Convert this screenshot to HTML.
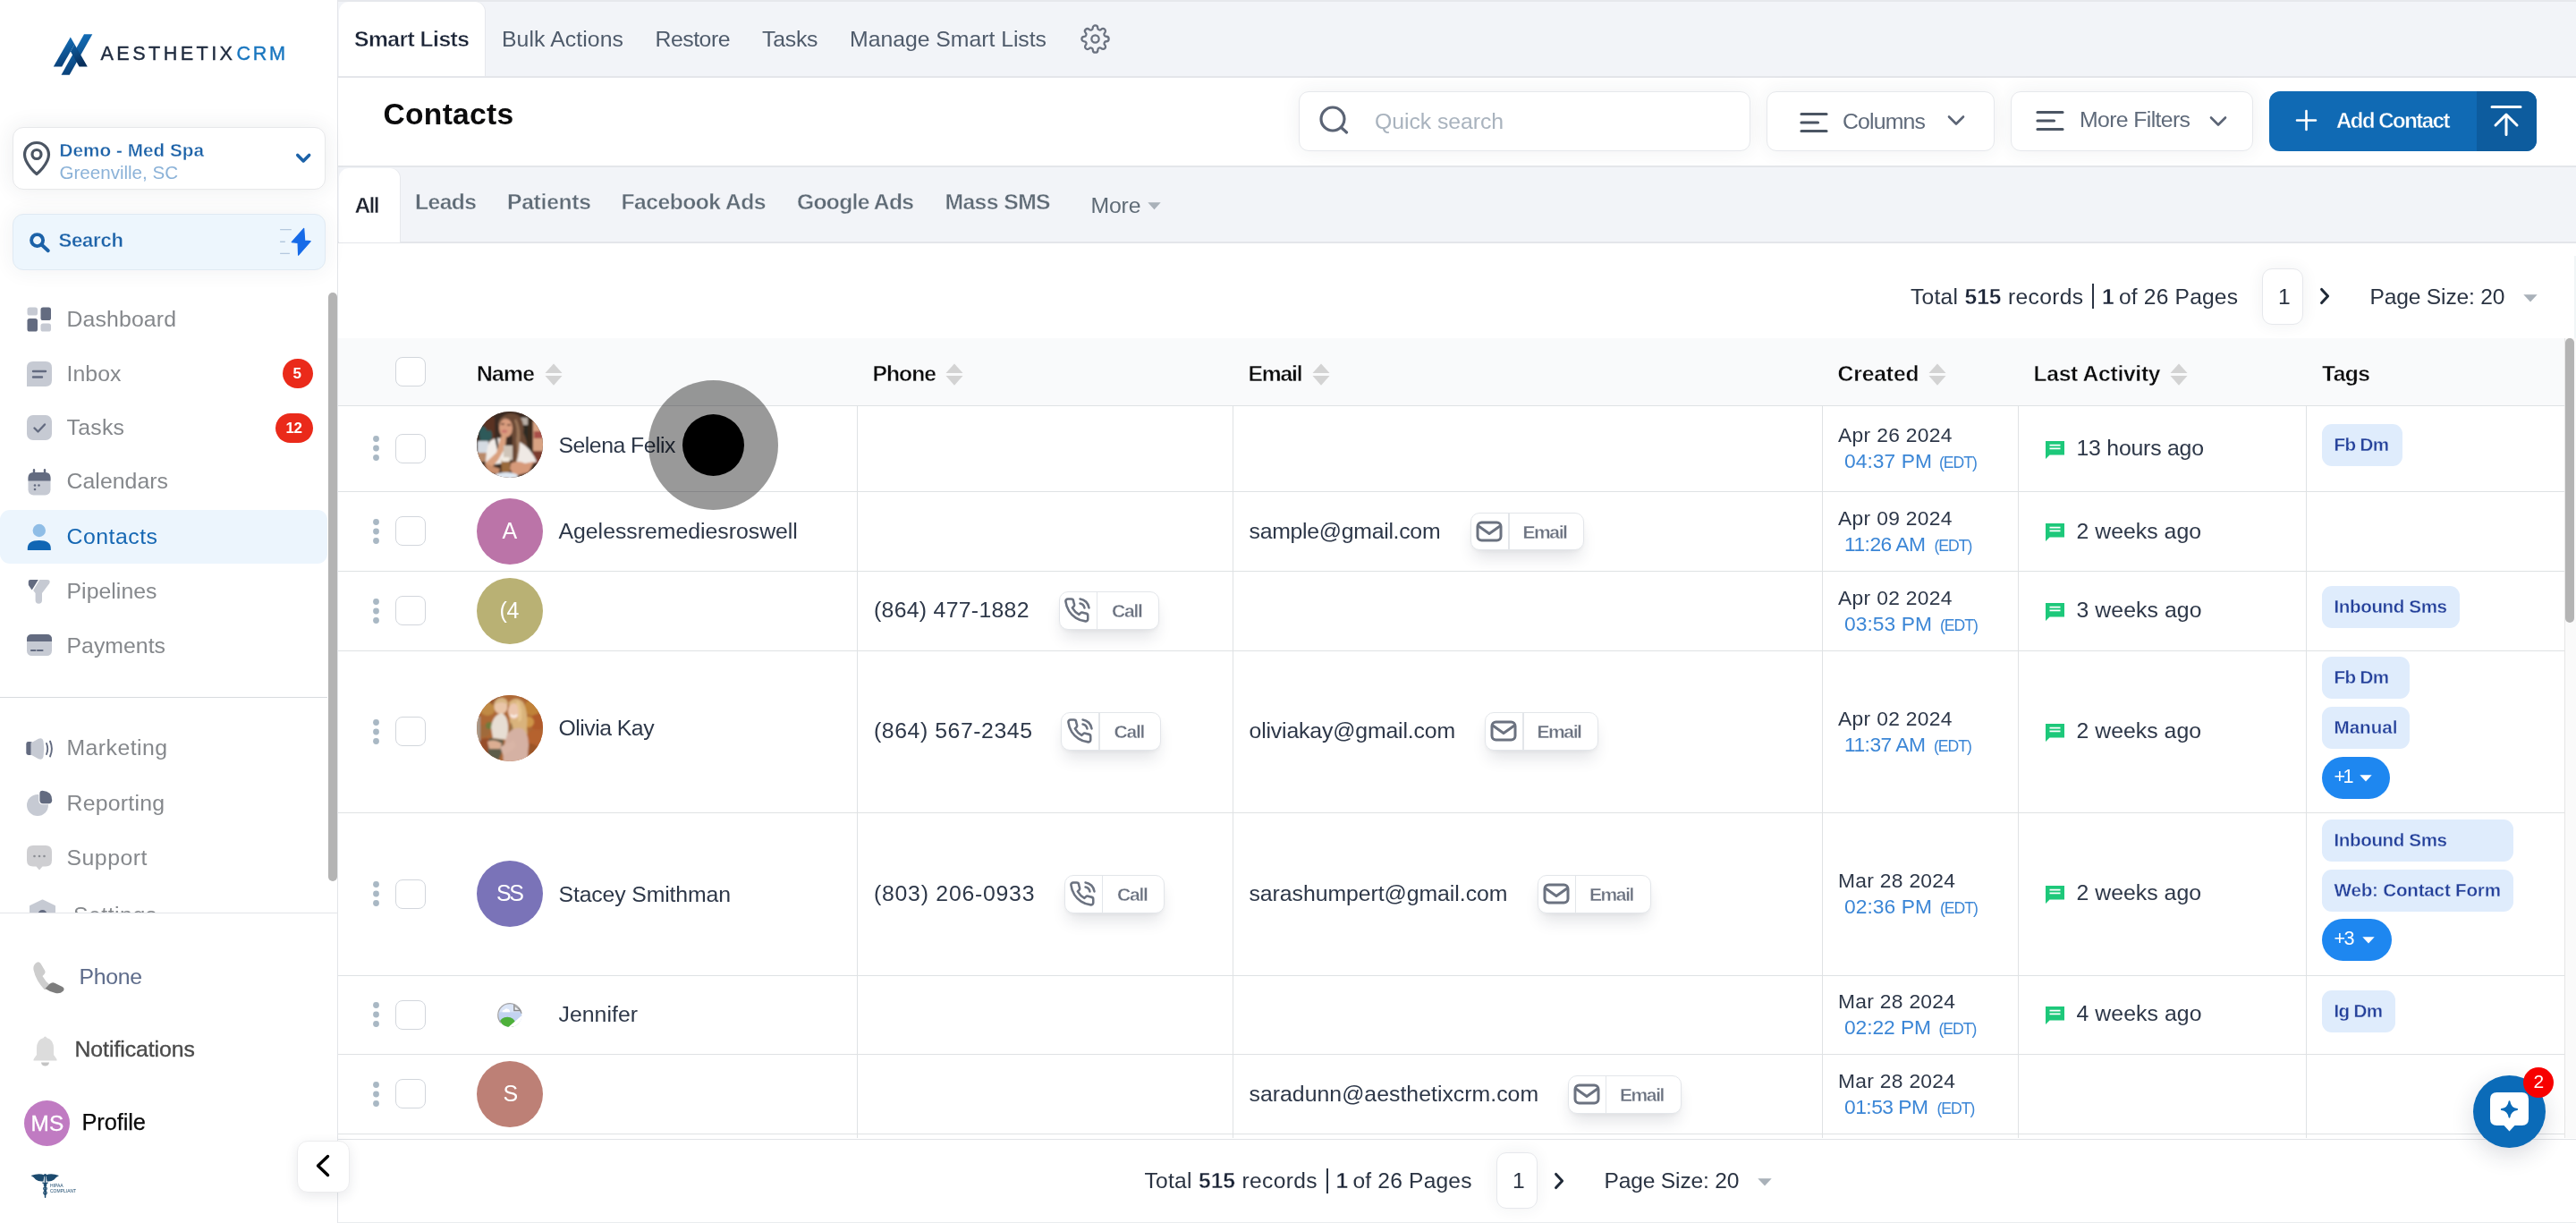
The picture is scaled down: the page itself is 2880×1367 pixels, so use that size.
<!DOCTYPE html>
<html lang="en"><head><meta charset="utf-8"><title>Contacts</title>
<style>
*{box-sizing:border-box;margin:0;padding:0}
html,body{width:2880px;height:1367px;overflow:hidden;background:#fff}
body{position:relative;font-family:"Liberation Sans",sans-serif;color:#2d3748}
.a{position:absolute}
.t{position:absolute;white-space:nowrap;line-height:1}
svg{position:absolute;overflow:visible}
.hl{position:absolute;height:2px;background:#e4e6ea}
.vl{position:absolute;width:2px;background:#e4e6ea}
.cb{position:absolute;width:34px;height:33px;border:1.5px solid #d2d6dc;border-radius:8px;background:#fff}
.av{position:absolute;width:74px;height:74px;border-radius:50%;overflow:hidden}
.tag{position:absolute;height:47px;border-radius:11px;background:#dfecfc}
.pill{position:absolute;height:47px;border-radius:24px;background:#1e87f0}
.btn{position:absolute;height:42.5px;border:1.5px solid #e3e6ea;border-radius:10px;background:#fff;box-shadow:0 12px 18px -4px rgba(30,40,60,.13),0 2px 4px rgba(30,40,60,.04)}
.btn i{position:absolute;top:0;bottom:0;width:1.5px;background:#e3e6ea}
.box{position:absolute;border:1.5px solid #e6e8ec;border-radius:11px;background:#fff;box-shadow:0 0 22px rgba(40,50,70,.07)}
#w{position:absolute;left:0;top:0;width:2880px;height:1367px;will-change:transform}

</style></head>
<body>
<div id="w">
<div class="a" style="left:378px;top:0;width:2502px;height:86px;background:#f2f4f8"></div>
<div class="hl" style="left:378px;top:0;width:2502px;height:2px;background:#e6e8ec"></div>
<div class="hl" style="left:378px;top:85px;width:2502px"></div>
<div class="a" style="left:379px;top:2px;width:163px;height:83px;background:#fff;border-radius:11px 11px 0 0;box-shadow:1px 0 0 #e6e8ec"></div>
<span class="t" style="left:396.0px;top:32.0px;font-size:24.6px;color:#1b2436;font-weight:700;letter-spacing:-0.50px;-webkit-text-stroke:0.39px #fff;">Smart Lists</span>
<span class="t" style="left:561.0px;top:32.0px;font-size:24.8px;color:#4f5b6b;letter-spacing:0.08px;">Bulk Actions</span>
<span class="t" style="left:732.5px;top:32.0px;font-size:24.8px;color:#4f5b6b;letter-spacing:-0.47px;">Restore</span>
<span class="t" style="left:852.0px;top:32.0px;font-size:24.8px;color:#4f5b6b;letter-spacing:-0.22px;">Tasks</span>
<span class="t" style="left:950.0px;top:32.0px;font-size:24.8px;color:#4f5b6b;letter-spacing:-0.03px;">Manage Smart Lists</span>
<svg style="left:1207.5px;top:27.2px" width="33" height="33" viewBox="0 0 24 24" fill="none" stroke="#6b7280" stroke-width="1.65" stroke-linecap="round" stroke-linejoin="round"><circle cx="12" cy="12" r="3"/><path d="M19.4 15a1.65 1.65 0 0 0 .33 1.82l.06.06a2 2 0 1 1-2.83 2.83l-.06-.06a1.65 1.65 0 0 0-1.82-.33 1.65 1.65 0 0 0-1 1.51V21a2 2 0 0 1-4 0v-.09A1.65 1.65 0 0 0 9 19.4a1.65 1.65 0 0 0-1.82.33l-.06.06a2 2 0 1 1-2.83-2.83l.06-.06a1.65 1.65 0 0 0 .33-1.82 1.65 1.65 0 0 0-1.51-1H3a2 2 0 0 1 0-4h.09A1.65 1.65 0 0 0 4.6 9a1.65 1.65 0 0 0-.33-1.82l-.06-.06a2 2 0 1 1 2.83-2.83l.06.06a1.65 1.65 0 0 0 1.82.33H9a1.65 1.65 0 0 0 1-1.51V3a2 2 0 0 1 4 0v.09a1.65 1.65 0 0 0 1 1.51 1.65 1.65 0 0 0 1.82-.33l.06-.06a2 2 0 1 1 2.83 2.83l-.06.06a1.65 1.65 0 0 0-.33 1.82V9a1.65 1.65 0 0 0 1.51 1H21a2 2 0 0 1 0 4h-.09a1.65 1.65 0 0 0-1.51 1z"/></svg>
<span class="t" style="left:428.5px;top:111.0px;font-size:33.6px;color:#0b0b0c;font-weight:700;letter-spacing:0.29px;">Contacts</span>
<div class="box" style="left:1452px;top:102px;width:505px;height:66.5px"></div>
<svg style="left:1472px;top:115px" width="38" height="38" viewBox="0 0 38 38" fill="none" stroke="#5b6475" stroke-width="3.2" stroke-linecap="round"><circle cx="18" cy="18" r="13"/><path d="M27.5 27.5L33.5 33"/></svg>
<span class="t" style="left:1537.0px;top:124.0px;font-size:24.8px;color:#a9b3be;letter-spacing:-0.06px;">Quick search</span>
<div class="box" style="left:1975px;top:102px;width:255px;height:66.5px"></div>
<svg style="left:2011px;top:124px" width="36" height="26" viewBox="0 0 36 26" fill="none" stroke="#4b5563" stroke-width="3.2" stroke-linecap="round"><path d="M3 3.5H31M3 13H21.5M3 22.5H31"/></svg>
<span class="t" style="left:2060.0px;top:124.0px;font-size:24.8px;color:#5f6a7a;letter-spacing:-0.81px;">Columns</span>
<svg style="left:2176px;top:128px" width="22" height="14" viewBox="0 0 22 14" fill="none" stroke="#5b6475" stroke-width="2.6" stroke-linecap="round" stroke-linejoin="round"><path d="M3 2.5L11 10.5L19 2.5"/></svg>
<div class="box" style="left:2248px;top:102px;width:271px;height:66.5px"></div>
<svg style="left:2275px;top:122px" width="36" height="26" viewBox="0 0 36 26" fill="none" stroke="#4b5563" stroke-width="3.2" stroke-linecap="round"><path d="M3 3.5H31M3 13H21.5M3 22.5H31"/></svg>
<span class="t" style="left:2325.0px;top:122.0px;font-size:24.8px;color:#5f6a7a;letter-spacing:-0.63px;">More Filters</span>
<svg style="left:2469px;top:129px" width="22" height="14" viewBox="0 0 22 14" fill="none" stroke="#5b6475" stroke-width="2.6" stroke-linecap="round" stroke-linejoin="round"><path d="M3 2.5L11 10.5L19 2.5"/></svg>
<div class="a" style="left:2537px;top:102px;width:299px;height:67px;border-radius:12px;background:#106ab4;overflow:hidden"><div class="a" style="left:232px;top:0;width:67px;height:67px;background:#0d5c9e"></div></div>
<svg style="left:2565px;top:122px" width="27" height="25" viewBox="0 0 27 25" fill="none" stroke="#fff" stroke-width="2.6" stroke-linecap="round"><path d="M13.5 2V23M3 12.5H24"/></svg>
<span class="t" style="left:2612.0px;top:123.0px;font-size:23.8px;color:#fff;font-weight:700;letter-spacing:-1.40px;-webkit-text-stroke:0.38px #106ab4;">Add Contact</span>
<svg style="left:2782px;top:116px" width="40" height="38" viewBox="0 0 40 38" fill="none" stroke="#fff" stroke-width="3" stroke-linecap="round" stroke-linejoin="round"><path d="M4 3.5H36M20 34.5V12.5M8 24L20 12L32 24"/></svg>
<div class="hl" style="left:378px;top:185px;width:2502px"></div>
<div class="a" style="left:378px;top:187px;width:2502px;height:84px;background:#f2f4f8"></div>
<div class="hl" style="left:378px;top:270px;width:2502px"></div>
<div class="a" style="left:379px;top:188px;width:68px;height:83px;background:#fff;border-radius:11px 11px 0 0;box-shadow:1px 0 0 #e6e8ec"></div>
<span class="t" style="left:396.5px;top:218.0px;font-size:24.6px;color:#1f2430;font-weight:700;letter-spacing:-1.72px;-webkit-text-stroke:0.39px #fff;">All</span>
<span class="t" style="left:464.0px;top:214.0px;font-size:24.6px;color:#5f6b76;font-weight:700;letter-spacing:-0.52px;-webkit-text-stroke:0.39px #f2f4f8;">Leads</span>
<span class="t" style="left:567.0px;top:214.0px;font-size:24.6px;color:#5f6b76;font-weight:700;letter-spacing:-0.24px;-webkit-text-stroke:0.39px #f2f4f8;">Patients</span>
<span class="t" style="left:694.5px;top:214.0px;font-size:24.6px;color:#5f6b76;font-weight:700;letter-spacing:-0.47px;-webkit-text-stroke:0.39px #f2f4f8;">Facebook Ads</span>
<span class="t" style="left:891.0px;top:214.0px;font-size:24.6px;color:#5f6b76;font-weight:700;letter-spacing:-0.68px;-webkit-text-stroke:0.39px #f2f4f8;">Google Ads</span>
<span class="t" style="left:1056.5px;top:214.0px;font-size:24.6px;color:#5f6b76;font-weight:700;letter-spacing:-0.52px;-webkit-text-stroke:0.39px #f2f4f8;">Mass SMS</span>
<span class="t" style="left:1219.5px;top:218.0px;font-size:24.8px;color:#5f6b76;letter-spacing:-0.17px;">More</span>
<svg style="left:1283px;top:226px" width="15" height="9" viewBox="0 0 15 9"><path d="M0.3 0.3H14.7L7.5 8.3Z" fill="#a9b1b9"/></svg>
<span class="t" style="left:2136.0px;top:320.0px;font-size:24.6px;color:#2a3342;letter-spacing:0.26px;">Total</span>
<span class="t" style="left:2196.5px;top:320.0px;font-size:24.6px;color:#1b2436;font-weight:700;letter-spacing:-0.02px;-webkit-text-stroke:0.39px #fff;">515</span>
<span class="t" style="left:2245.0px;top:320.0px;font-size:24.6px;color:#2a3342;letter-spacing:0.33px;">records</span>
<div class="a" style="left:2339.0px;top:317.0px;width:2px;height:28px;background:#2a3342"></div>
<span class="t" style="left:2350.0px;top:320.0px;font-size:24.6px;color:#1b2436;font-weight:700;-webkit-text-stroke:0.39px #fff;">1</span>
<span class="t" style="left:2369.0px;top:320.0px;font-size:24.6px;color:#2a3342;letter-spacing:0.17px;">of 26 Pages</span>
<div class="a" style="left:2529px;top:300px;width:46px;height:63px;border:1.5px solid #e6e8ec;border-radius:11px;background:#fff;box-shadow:0 0 18px rgba(40,50,70,.07)"></div>
<span class="t" style="left:2547.0px;top:320.0px;font-size:24.6px;color:#2a3342;">1</span>
<svg style="left:2592px;top:320.0px" width="14" height="22" viewBox="0 0 14 22" fill="none" stroke="#1f2937" stroke-width="3" stroke-linecap="round" stroke-linejoin="round"><path d="M3.6 3.4L10.6 11L3.6 18.6"/></svg>
<span class="t" style="left:2649.5px;top:320.0px;font-size:24.6px;color:#2a3342;letter-spacing:-0.18px;">Page Size: 20</span>
<svg style="left:2821px;top:328.5px" width="16" height="9" viewBox="0 0 16 9"><path d="M0.3 0.3H15.7L8 8.6Z" fill="#a9b1b9"/></svg>
<div class="a" style="left:378px;top:378px;width:2489px;height:75px;background:#f9fafb"></div>
<div class="hl" style="left:378px;top:453px;width:2489px;height:1px;background:#dfe2e4"></div>
<div class="hl" style="left:378px;top:549px;width:2489px;height:1px;background:#dfe2e4"></div>
<div class="hl" style="left:378px;top:638px;width:2489px;height:1px;background:#dfe2e4"></div>
<div class="hl" style="left:378px;top:727px;width:2489px;height:1px;background:#dfe2e4"></div>
<div class="hl" style="left:378px;top:908px;width:2489px;height:1px;background:#dfe2e4"></div>
<div class="hl" style="left:378px;top:1090px;width:2489px;height:1px;background:#dfe2e4"></div>
<div class="hl" style="left:378px;top:1178px;width:2489px;height:1px;background:#dfe2e4"></div>
<div class="hl" style="left:378px;top:1267px;width:2489px;height:1px;background:#dfe2e4"></div>
<div class="vl" style="left:958px;top:453px;width:1px;height:820px;background:#dfe2e4"></div>
<div class="vl" style="left:1378px;top:453px;width:1px;height:820px;background:#dfe2e4"></div>
<div class="vl" style="left:2037px;top:453px;width:1px;height:820px;background:#dfe2e4"></div>
<div class="vl" style="left:2256px;top:453px;width:1px;height:820px;background:#dfe2e4"></div>
<div class="vl" style="left:2578px;top:453px;width:1px;height:820px;background:#dfe2e4"></div>
<div class="a" style="left:2867px;top:378px;width:13px;height:895px;background:#fafafa;border-left:1px solid #e6e6e6"></div>
<div class="a" style="left:2867.5px;top:378px;width:10px;height:318px;background:#b4b4b4;border-radius:6px"></div>
<div class="cb" style="left:442px;top:399px"></div>
<span class="t" style="left:533.0px;top:406.0px;font-size:24.6px;color:#0c0c0d;font-weight:700;letter-spacing:-0.66px;-webkit-text-stroke:0.39px #f9fafb;">Name</span>
<svg style="left:608.5px;top:406px" width="20" height="26" viewBox="0 0 20 26"><path d="M10 0.5L19.5 11H0.5Z" fill="#d3d3d3"/><path d="M0.5 14H19.5L10 24.8Z" fill="#d3d3d3"/></svg>
<span class="t" style="left:975.5px;top:406.0px;font-size:24.6px;color:#0c0c0d;font-weight:700;letter-spacing:-0.91px;-webkit-text-stroke:0.39px #f9fafb;">Phone</span>
<svg style="left:1057.0px;top:406px" width="20" height="26" viewBox="0 0 20 26"><path d="M10 0.5L19.5 11H0.5Z" fill="#d3d3d3"/><path d="M0.5 14H19.5L10 24.8Z" fill="#d3d3d3"/></svg>
<span class="t" style="left:1395.5px;top:406.0px;font-size:24.6px;color:#0c0c0d;font-weight:700;letter-spacing:-1.16px;-webkit-text-stroke:0.39px #f9fafb;">Email</span>
<svg style="left:1466.5px;top:406px" width="20" height="26" viewBox="0 0 20 26"><path d="M10 0.5L19.5 11H0.5Z" fill="#d3d3d3"/><path d="M0.5 14H19.5L10 24.8Z" fill="#d3d3d3"/></svg>
<span class="t" style="left:2054.5px;top:406.0px;font-size:24.6px;color:#0c0c0d;font-weight:700;letter-spacing:-0.10px;-webkit-text-stroke:0.39px #f9fafb;">Created</span>
<svg style="left:2155.5px;top:406px" width="20" height="26" viewBox="0 0 20 26"><path d="M10 0.5L19.5 11H0.5Z" fill="#d3d3d3"/><path d="M0.5 14H19.5L10 24.8Z" fill="#d3d3d3"/></svg>
<span class="t" style="left:2273.5px;top:406.0px;font-size:24.6px;color:#0c0c0d;font-weight:700;letter-spacing:-0.28px;-webkit-text-stroke:0.39px #f9fafb;">Last Activity</span>
<svg style="left:2425.5px;top:406px" width="20" height="26" viewBox="0 0 20 26"><path d="M10 0.5L19.5 11H0.5Z" fill="#d3d3d3"/><path d="M0.5 14H19.5L10 24.8Z" fill="#d3d3d3"/></svg>
<span class="t" style="left:2596.0px;top:406.0px;font-size:24.6px;color:#0c0c0d;font-weight:700;letter-spacing:-0.53px;-webkit-text-stroke:0.39px #f9fafb;">Tags</span>
<svg style="left:416px;top:486.0px" width="9" height="30" viewBox="0 0 9 30" fill="#a9b8c4"><circle cx="4.5" cy="4.5" r="3.4"/><circle cx="4.5" cy="15" r="3.4"/><circle cx="4.5" cy="25.5" r="3.4"/></svg>
<div class="cb" style="left:442px;top:484.5px"></div>
<div class="av" style="left:533px;top:460px;background:#5b3a2c"><svg style="left:0;top:0" width="74" height="74" viewBox="0 0 74 74">
<defs><filter id="bl1" x="-10%" y="-10%" width="120%" height="120%"><feGaussianBlur stdDeviation="1.1"/></filter></defs>
<g filter="url(#bl1)">
<rect x="-4" y="-4" width="82" height="82" fill="#3b2a22"/>
<rect x="8" y="6" width="12" height="40" fill="#5a3324"/>
<rect x="46" y="7" width="16" height="8" fill="#b9afa6"/>
<rect x="48" y="16" width="10" height="30" fill="#2e2a24"/>
<rect x="57" y="6" width="6" height="52" fill="#3a2a1e"/>
<rect x="63" y="10" width="14" height="46" fill="#d8a383"/>
<rect x="64" y="22" width="10" height="8" fill="#a8504a"/>
<rect x="63" y="44" width="14" height="14" fill="#7a3a2e"/>
<path d="M2 20Q8 12 12 22Q18 18 17 30Q12 36 4 34Z" fill="#2f5a5a"/>
<rect x="1" y="33" width="12" height="13" rx="1" fill="#d5dbe2"/>
<rect x="-2" y="46" width="14" height="10" fill="#b98a6a"/>
<path d="M25 10Q34 -2 46 4Q54 10 52 24Q58 34 56 48Q56 60 48 62L38 60Q40 44 40 30Q34 8 25 14Z" fill="#6a4836"/>
<path d="M44 8Q50 20 48 34Q52 46 48 58L44 56Q46 44 44 32Q46 18 42 10Z" fill="#9a7458"/>
<path d="M24 14Q26 6 33 5Q30 12 27 22Z" fill="#7a5a44"/>
<ellipse cx="32.5" cy="18.5" rx="7.5" ry="10.5" fill="#d99c7e"/>
<ellipse cx="31" cy="22" rx="3.2" ry="1.6" fill="#c9706a"/>
<path d="M27 14h4M34 15h4" stroke="#5a3a30" stroke-width="1.3"/>
<path d="M14 34Q20 28 27 30L34 44L30 58L10 60Q10 44 14 34Z" fill="#f1ece8"/>
<path d="M48 34Q60 40 67 56L54 60L44 58Q48 46 48 34Z" fill="#efe9e5"/>
<path d="M20 29L23 29L25 42L23 43Z" fill="#2a2422"/>
<path d="M27 28Q31 24 33 29L32 40L24 54L14 66L9 58L22 46Z" fill="#d9a07e"/>
<path d="M30 38L40 38L40 54L30 54Z" fill="#cfc4b8"/>
<rect x="27.5" y="52" width="9.5" height="16" rx="2" fill="#9a6a3a"/>
<rect x="27.5" y="51" width="9.5" height="5" rx="2" fill="#f3ece2"/>
<path d="M38 58Q46 54 54 58L64 56L58 68L42 72L37 64Z" fill="#d79a7a"/>
<path d="M9 58L26 64L24 70L12 68Z" fill="#c98e6c"/>
<ellipse cx="33" cy="72" rx="13" ry="4" fill="#dfe8f2"/>
</g></svg></div>
<span class="t" style="left:624.5px;top:486.0px;font-size:24.8px;color:#2d3748;letter-spacing:-0.50px;">Selena Felix</span>
<span class="t" style="left:2055.0px;top:475.0px;font-size:22.8px;color:#2d3748;letter-spacing:0.33px;">Apr 26 2024</span>
<span class="t" style="left:2062.0px;top:504.0px;font-size:22.8px;color:#3b86d6;letter-spacing:0.06px;">04:37 PM</span>
<span class="t" style="left:2168.0px;top:509.0px;font-size:17.6px;color:#3b86d6;letter-spacing:-1.00px;">(EDT)</span>
<svg style="left:2286.5px;top:492.7px" width="21" height="20" viewBox="0 0 21 20"><path d="M0 0H21V15.5H4.5L0 20Z" fill="#1dc87a"/><path d="M4.5 4.6H16.5M4.5 8.3H16.5" stroke="#fff" stroke-width="1.7"/></svg>
<span class="t" style="left:2321.5px;top:489.0px;font-size:24.8px;color:#2d3748;letter-spacing:-0.21px;">13 hours ago</span>
<div class="tag" style="left:2596px;top:473.5px;width:89.5px"></div>
<span class="t" style="left:2609.5px;top:487.0px;font-size:20.6px;color:#24409a;font-weight:700;letter-spacing:-0.64px;-webkit-text-stroke:0.33px #dfecfc;">Fb Dm</span>
<svg style="left:416px;top:578.5px" width="9" height="30" viewBox="0 0 9 30" fill="#a9b8c4"><circle cx="4.5" cy="4.5" r="3.4"/><circle cx="4.5" cy="15" r="3.4"/><circle cx="4.5" cy="25.5" r="3.4"/></svg>
<div class="cb" style="left:442px;top:577.0px"></div>
<div class="av" style="left:533px;top:556.5px;background:#bb74a8"></div>
<span class="t" style="left:561.5px;top:581.0px;font-size:25.0px;color:#fff;">A</span>
<span class="t" style="left:624.5px;top:582.0px;font-size:24.8px;color:#2d3748;">Agelessremediesroswell</span>
<span class="t" style="left:1396.5px;top:582.0px;font-size:24.8px;color:#2d3748;letter-spacing:-0.27px;">sample@gmail.com</span>
<div class="btn" style="left:1644.0px;top:572.7px;width:127px"><i style="left:41px"></i></div>
<svg style="left:1650.0px;top:581.7px" width="30" height="24" viewBox="0 0 30 24" fill="none" stroke="#6b7280" stroke-width="3" stroke-linecap="round" stroke-linejoin="round"><rect x="2" y="2" width="26" height="20" rx="4.5"/><path d="M3 6L15 14.5L27 6"/></svg>
<span class="t" style="left:1702.5px;top:584.0px;font-size:21.0px;color:#6b7280;font-weight:700;letter-spacing:-1.41px;-webkit-text-stroke:0.34px #fff;">Email</span>
<span class="t" style="left:2055.0px;top:568.0px;font-size:22.8px;color:#2d3748;letter-spacing:0.33px;">Apr 09 2024</span>
<span class="t" style="left:2062.0px;top:597.0px;font-size:22.8px;color:#3b86d6;letter-spacing:-0.52px;">11:26 AM</span>
<span class="t" style="left:2162.5px;top:602.0px;font-size:17.6px;color:#3b86d6;letter-spacing:-1.00px;">(EDT)</span>
<svg style="left:2286.5px;top:585.2px" width="21" height="20" viewBox="0 0 21 20"><path d="M0 0H21V15.5H4.5L0 20Z" fill="#1dc87a"/><path d="M4.5 4.6H16.5M4.5 8.3H16.5" stroke="#fff" stroke-width="1.7"/></svg>
<span class="t" style="left:2321.5px;top:582.0px;font-size:24.8px;color:#2d3748;letter-spacing:0.03px;">2 weeks ago</span>
<svg style="left:416px;top:667.7px" width="9" height="30" viewBox="0 0 9 30" fill="#a9b8c4"><circle cx="4.5" cy="4.5" r="3.4"/><circle cx="4.5" cy="15" r="3.4"/><circle cx="4.5" cy="25.5" r="3.4"/></svg>
<div class="cb" style="left:442px;top:666.2px"></div>
<div class="av" style="left:533px;top:645.7px;background:#b9b174"></div>
<span class="t" style="left:558.5px;top:670.0px;font-size:25.0px;color:#fff;letter-spacing:-0.23px;">(4</span>
<span class="t" style="left:977.0px;top:670.0px;font-size:24.8px;color:#2d3748;letter-spacing:0.30px;">(864) 477-1882</span>
<div class="btn" style="left:1183.5px;top:661.2px;width:112px"><i style="left:41px"></i></div>
<svg style="left:1190.0px;top:667.2px" width="30" height="30" viewBox="0 0 24 24" fill="none" stroke="#6b7280" stroke-width="2.05" stroke-linecap="round" stroke-linejoin="round"><path d="M14.05 6A5 5 0 0 1 18 9.95M14.05 2A9 9 0 0 1 22 9.94M21 16.92v3a2 2 0 0 1-2.18 2 19.8 19.8 0 0 1-8.63-3.07 19.5 19.5 0 0 1-6-6A19.8 19.8 0 0 1 1.12 4.18 2 2 0 0 1 3.11 2h3a2 2 0 0 1 2 1.72c.13.96.36 1.9.7 2.81a2 2 0 0 1-.45 2.11L7.09 9.91a16 16 0 0 0 6 6l1.27-1.27a2 2 0 0 1 2.11-.45c.9.34 1.85.57 2.81.7A2 2 0 0 1 21 16.92z"/></svg>
<span class="t" style="left:1243.0px;top:672.0px;font-size:21.0px;color:#6b7280;font-weight:700;letter-spacing:-1.20px;-webkit-text-stroke:0.34px #fff;">Call</span>
<span class="t" style="left:2055.0px;top:657.0px;font-size:22.8px;color:#2d3748;letter-spacing:0.33px;">Apr 02 2024</span>
<span class="t" style="left:2062.0px;top:686.0px;font-size:22.8px;color:#3b86d6;letter-spacing:0.06px;">03:53 PM</span>
<span class="t" style="left:2169.0px;top:691.0px;font-size:17.6px;color:#3b86d6;letter-spacing:-1.00px;">(EDT)</span>
<svg style="left:2286.5px;top:673.7px" width="21" height="20" viewBox="0 0 21 20"><path d="M0 0H21V15.5H4.5L0 20Z" fill="#1dc87a"/><path d="M4.5 4.6H16.5M4.5 8.3H16.5" stroke="#fff" stroke-width="1.7"/></svg>
<span class="t" style="left:2321.5px;top:670.0px;font-size:24.8px;color:#2d3748;letter-spacing:0.08px;">3 weeks ago</span>
<div class="tag" style="left:2596px;top:655.0px;width:154.0px"></div>
<span class="t" style="left:2609.5px;top:668.0px;font-size:20.6px;color:#24409a;font-weight:700;letter-spacing:-0.39px;-webkit-text-stroke:0.33px #dfecfc;">Inbound Sms</span>
<svg style="left:416px;top:802.7px" width="9" height="30" viewBox="0 0 9 30" fill="#a9b8c4"><circle cx="4.5" cy="4.5" r="3.4"/><circle cx="4.5" cy="15" r="3.4"/><circle cx="4.5" cy="25.5" r="3.4"/></svg>
<div class="cb" style="left:442px;top:801.2px"></div>
<div class="av" style="left:533px;top:776.5px;background:#b5683a"><svg style="left:0;top:0" width="74" height="74" viewBox="0 0 74 74">
<defs><filter id="bl2" x="-10%" y="-10%" width="120%" height="120%"><feGaussianBlur stdDeviation="1.2"/></filter></defs>
<g filter="url(#bl2)">
<rect x="-4" y="-4" width="82" height="82" fill="#ad6734"/>
<circle cx="12" cy="14" r="9" fill="#c08a44"/><circle cx="20" cy="4" r="7" fill="#9a5a30"/>
<circle cx="62" cy="14" r="9" fill="#c08238"/><circle cx="68" cy="30" r="9" fill="#b05a2a"/>
<circle cx="58" cy="30" r="6" fill="#cf9648"/><circle cx="66" cy="48" r="10" fill="#b5622f"/>
<circle cx="60" cy="64" r="10" fill="#9c5426"/><circle cx="8" cy="40" r="7" fill="#a06a3a"/>
<circle cx="10" cy="58" r="10" fill="#964e2a"/><circle cx="14" cy="34" r="4" fill="#6f7a3a"/>
<rect x="-1" y="24" width="5" height="28" fill="#a89a8a"/>
<path d="M36 8Q44 0 52 8Q58 20 56 36Q58 48 52 52L40 48Q36 30 36 8Z" fill="#d9b37c"/>
<path d="M38 30Q42 36 40 46L36 46Q36 38 38 30Z" fill="#9a7448"/>
<ellipse cx="41.5" cy="18" rx="6.5" ry="9" fill="#ecc6ae"/>
<path d="M38 22Q41.5 26 45 22" stroke="#fff" stroke-width="1.6" fill="none"/>
<path d="M46 6Q52 14 50 28L46 30Q48 16 44 8Z" fill="#e6c48e"/>
<ellipse cx="27" cy="13" rx="7.5" ry="8" fill="#e9c5a8"/>
<path d="M19 11Q21 2 29 3Q35 4 35 11Q28 5 19 11Z" fill="#d8b684"/>
<path d="M16 36Q18 22 28 20Q36 24 35 40L34 50L18 48Z" fill="#e7ded3"/>
<path d="M34 44Q42 34 52 38Q58 44 58 56L56 78L30 78Q28 62 34 44Z" fill="#d5b1a3"/>
<path d="M14 48L30 50L28 64L24 74L12 70Z" fill="#5c5c4a"/>
<path d="M12 52Q20 48 28 54L26 60L14 60Z" fill="#dcae92"/>
<path d="M26 58L42 50L44 58L30 68Z" fill="#d9b5a6"/>
</g></svg></div>
<span class="t" style="left:624.5px;top:802.0px;font-size:24.8px;color:#2d3748;letter-spacing:-0.51px;">Olivia Kay</span>
<span class="t" style="left:977.0px;top:805.0px;font-size:24.8px;color:#2d3748;letter-spacing:0.57px;">(864) 567-2345</span>
<div class="btn" style="left:1186.0px;top:796.2px;width:112px"><i style="left:41px"></i></div>
<svg style="left:1192.5px;top:802.2px" width="30" height="30" viewBox="0 0 24 24" fill="none" stroke="#6b7280" stroke-width="2.05" stroke-linecap="round" stroke-linejoin="round"><path d="M14.05 6A5 5 0 0 1 18 9.95M14.05 2A9 9 0 0 1 22 9.94M21 16.92v3a2 2 0 0 1-2.18 2 19.8 19.8 0 0 1-8.63-3.07 19.5 19.5 0 0 1-6-6A19.8 19.8 0 0 1 1.12 4.18 2 2 0 0 1 3.11 2h3a2 2 0 0 1 2 1.72c.13.96.36 1.9.7 2.81a2 2 0 0 1-.45 2.11L7.09 9.91a16 16 0 0 0 6 6l1.27-1.27a2 2 0 0 1 2.11-.45c.9.34 1.85.57 2.81.7A2 2 0 0 1 21 16.92z"/></svg>
<span class="t" style="left:1245.5px;top:807.0px;font-size:21.0px;color:#6b7280;font-weight:700;letter-spacing:-1.20px;-webkit-text-stroke:0.34px #fff;">Call</span>
<span class="t" style="left:1396.5px;top:805.0px;font-size:24.8px;color:#2d3748;letter-spacing:-0.15px;">oliviakay@gmail.com</span>
<div class="btn" style="left:1660.0px;top:796.2px;width:127px"><i style="left:41px"></i></div>
<svg style="left:1666.0px;top:805.2px" width="30" height="24" viewBox="0 0 30 24" fill="none" stroke="#6b7280" stroke-width="3" stroke-linecap="round" stroke-linejoin="round"><rect x="2" y="2" width="26" height="20" rx="4.5"/><path d="M3 6L15 14.5L27 6"/></svg>
<span class="t" style="left:1718.5px;top:807.0px;font-size:21.0px;color:#6b7280;font-weight:700;letter-spacing:-1.41px;-webkit-text-stroke:0.34px #fff;">Email</span>
<span class="t" style="left:2055.0px;top:792.0px;font-size:22.8px;color:#2d3748;letter-spacing:0.33px;">Apr 02 2024</span>
<span class="t" style="left:2062.0px;top:821.0px;font-size:22.8px;color:#3b86d6;letter-spacing:-0.52px;">11:37 AM</span>
<span class="t" style="left:2162.0px;top:826.0px;font-size:17.6px;color:#3b86d6;letter-spacing:-1.00px;">(EDT)</span>
<svg style="left:2286.5px;top:808.7px" width="21" height="20" viewBox="0 0 21 20"><path d="M0 0H21V15.5H4.5L0 20Z" fill="#1dc87a"/><path d="M4.5 4.6H16.5M4.5 8.3H16.5" stroke="#fff" stroke-width="1.7"/></svg>
<span class="t" style="left:2321.5px;top:805.0px;font-size:24.8px;color:#2d3748;letter-spacing:0.03px;">2 weeks ago</span>
<div class="tag" style="left:2596px;top:734.0px;width:98.0px"></div>
<span class="t" style="left:2609.5px;top:747.0px;font-size:20.6px;color:#24409a;font-weight:700;letter-spacing:-0.64px;-webkit-text-stroke:0.33px #dfecfc;">Fb Dm</span>
<div class="tag" style="left:2596px;top:789.5px;width:98.0px"></div>
<span class="t" style="left:2609.5px;top:803.0px;font-size:20.6px;color:#24409a;font-weight:700;-webkit-text-stroke:0.33px #dfecfc;">Manual</span>
<div class="pill" style="left:2596px;top:845.7px;width:75.5px"></div>
<span class="t" style="left:2609.5px;top:857.0px;font-size:21.6px;color:#fff;letter-spacing:-2.50px;">+1</span>
<svg style="left:2638.0px;top:866.0px" width="14" height="8" viewBox="0 0 14 8"><path d="M0.3 0.3H13.7L7 7.6Z" fill="#fff"/></svg>
<svg style="left:416px;top:984.0px" width="9" height="30" viewBox="0 0 9 30" fill="#a9b8c4"><circle cx="4.5" cy="4.5" r="3.4"/><circle cx="4.5" cy="15" r="3.4"/><circle cx="4.5" cy="25.5" r="3.4"/></svg>
<div class="cb" style="left:442px;top:982.5px"></div>
<div class="av" style="left:533px;top:962.0px;background:#7a73b8"></div>
<span class="t" style="left:555.0px;top:986.0px;font-size:25.0px;color:#fff;letter-spacing:-2.50px;">SS</span>
<span class="t" style="left:624.5px;top:988.0px;font-size:24.8px;color:#2d3748;letter-spacing:-0.13px;">Stacey Smithman</span>
<span class="t" style="left:977.0px;top:987.0px;font-size:24.8px;color:#2d3748;letter-spacing:0.76px;">(803) 206-0933</span>
<div class="btn" style="left:1189.5px;top:978.2px;width:112px"><i style="left:41px"></i></div>
<svg style="left:1196.0px;top:984.2px" width="30" height="30" viewBox="0 0 24 24" fill="none" stroke="#6b7280" stroke-width="2.05" stroke-linecap="round" stroke-linejoin="round"><path d="M14.05 6A5 5 0 0 1 18 9.95M14.05 2A9 9 0 0 1 22 9.94M21 16.92v3a2 2 0 0 1-2.18 2 19.8 19.8 0 0 1-8.63-3.07 19.5 19.5 0 0 1-6-6A19.8 19.8 0 0 1 1.12 4.18 2 2 0 0 1 3.11 2h3a2 2 0 0 1 2 1.72c.13.96.36 1.9.7 2.81a2 2 0 0 1-.45 2.11L7.09 9.91a16 16 0 0 0 6 6l1.27-1.27a2 2 0 0 1 2.11-.45c.9.34 1.85.57 2.81.7A2 2 0 0 1 21 16.92z"/></svg>
<span class="t" style="left:1249.0px;top:989.0px;font-size:21.0px;color:#6b7280;font-weight:700;letter-spacing:-1.20px;-webkit-text-stroke:0.34px #fff;">Call</span>
<span class="t" style="left:1396.5px;top:987.0px;font-size:24.8px;color:#2d3748;letter-spacing:-0.04px;">sarashumpert@gmail.com</span>
<div class="btn" style="left:1718.5px;top:978.2px;width:127px"><i style="left:41px"></i></div>
<svg style="left:1724.5px;top:987.2px" width="30" height="24" viewBox="0 0 30 24" fill="none" stroke="#6b7280" stroke-width="3" stroke-linecap="round" stroke-linejoin="round"><rect x="2" y="2" width="26" height="20" rx="4.5"/><path d="M3 6L15 14.5L27 6"/></svg>
<span class="t" style="left:1777.0px;top:989.0px;font-size:21.0px;color:#6b7280;font-weight:700;letter-spacing:-1.41px;-webkit-text-stroke:0.34px #fff;">Email</span>
<span class="t" style="left:2055.0px;top:973.0px;font-size:22.8px;color:#2d3748;letter-spacing:0.30px;">Mar 28 2024</span>
<span class="t" style="left:2062.0px;top:1002.0px;font-size:22.8px;color:#3b86d6;letter-spacing:0.06px;">02:36 PM</span>
<span class="t" style="left:2169.0px;top:1007.0px;font-size:17.6px;color:#3b86d6;letter-spacing:-1.00px;">(EDT)</span>
<svg style="left:2286.5px;top:989.7px" width="21" height="20" viewBox="0 0 21 20"><path d="M0 0H21V15.5H4.5L0 20Z" fill="#1dc87a"/><path d="M4.5 4.6H16.5M4.5 8.3H16.5" stroke="#fff" stroke-width="1.7"/></svg>
<span class="t" style="left:2321.5px;top:986.0px;font-size:24.8px;color:#2d3748;letter-spacing:0.03px;">2 weeks ago</span>
<div class="tag" style="left:2596px;top:916.0px;width:214.0px"></div>
<span class="t" style="left:2609.5px;top:929.0px;font-size:20.6px;color:#24409a;font-weight:700;letter-spacing:-0.39px;-webkit-text-stroke:0.33px #dfecfc;">Inbound Sms</span>
<div class="tag" style="left:2596px;top:971.5px;width:214.0px"></div>
<span class="t" style="left:2609.5px;top:985.0px;font-size:20.6px;color:#24409a;font-weight:700;letter-spacing:-0.19px;-webkit-text-stroke:0.33px #dfecfc;">Web: Contact Form</span>
<div class="pill" style="left:2596px;top:1027.0px;width:78.0px"></div>
<span class="t" style="left:2609.5px;top:1038.0px;font-size:21.6px;color:#fff;letter-spacing:-1.66px;">+3</span>
<svg style="left:2640.5px;top:1047.3px" width="14" height="8" viewBox="0 0 14 8"><path d="M0.3 0.3H13.7L7 7.6Z" fill="#fff"/></svg>
<svg style="left:416px;top:1119.0px" width="9" height="30" viewBox="0 0 9 30" fill="#a9b8c4"><circle cx="4.5" cy="4.5" r="3.4"/><circle cx="4.5" cy="15" r="3.4"/><circle cx="4.5" cy="25.5" r="3.4"/></svg>
<div class="cb" style="left:442px;top:1117.5px"></div>
<svg style="left:555.6px;top:1120.8px" width="28.4" height="28.4" viewBox="0 0 29 29"><defs><clipPath id="bk"><circle cx="14.6" cy="14.4" r="13.3"/></clipPath></defs>
<g clip-path="url(#bk)"><rect width="29" height="29" fill="#c3d3f0"/><rect x="0" y="0" width="29" height="10.5" fill="#dbe5f7"/><path d="M5.6 10.5Q5.6 8.2 8 8Q9.5 5.6 11.8 6.8Q14.4 7.2 14.4 10.5Z" fill="#fff"/><ellipse cx="11.5" cy="23" rx="9" ry="7" fill="#4db03a"/><path d="M19.3 0H29V8.6H19.3Z" fill="#f4f6fa"/><path d="M19.3 2V8.6H28" fill="none" stroke="#8a8a8a" stroke-width="1.5"/><path d="M19.6 3.2L26.5 8.4" stroke="#9a9a9a" stroke-width="1.2"/><path d="M29 13.5L11 29H29Z" fill="#fff"/><path d="M29 19L17.5 29H29Z" fill="#d9efd4"/></g><path d="M4.2 22.8A13.3 13.3 0 0 1 24 5" fill="none" stroke="#a3a3a6" stroke-width="1.3"/><path d="M24 5A13.3 13.3 0 0 1 27.6 12" fill="none" stroke="#8f8f92" stroke-width="1.3"/></svg>
<span class="t" style="left:624.5px;top:1122.0px;font-size:24.8px;color:#2d3748;letter-spacing:0.04px;">Jennifer</span>
<span class="t" style="left:2055.0px;top:1108.0px;font-size:22.8px;color:#2d3748;letter-spacing:0.30px;">Mar 28 2024</span>
<span class="t" style="left:2062.0px;top:1137.0px;font-size:22.8px;color:#3b86d6;letter-spacing:-0.08px;">02:22 PM</span>
<span class="t" style="left:2167.5px;top:1142.0px;font-size:17.6px;color:#3b86d6;letter-spacing:-1.00px;">(EDT)</span>
<svg style="left:2286.5px;top:1124.7px" width="21" height="20" viewBox="0 0 21 20"><path d="M0 0H21V15.5H4.5L0 20Z" fill="#1dc87a"/><path d="M4.5 4.6H16.5M4.5 8.3H16.5" stroke="#fff" stroke-width="1.7"/></svg>
<span class="t" style="left:2321.5px;top:1121.0px;font-size:24.8px;color:#2d3748;letter-spacing:0.08px;">4 weeks ago</span>
<div class="tag" style="left:2596px;top:1107.0px;width:82.0px"></div>
<span class="t" style="left:2609.5px;top:1120.0px;font-size:20.6px;color:#24409a;font-weight:700;letter-spacing:-0.68px;-webkit-text-stroke:0.33px #dfecfc;">Ig Dm</span>
<svg style="left:416px;top:1207.7px" width="9" height="30" viewBox="0 0 9 30" fill="#a9b8c4"><circle cx="4.5" cy="4.5" r="3.4"/><circle cx="4.5" cy="15" r="3.4"/><circle cx="4.5" cy="25.5" r="3.4"/></svg>
<div class="cb" style="left:442px;top:1206.2px"></div>
<div class="av" style="left:533px;top:1185.7px;background:#bd8076"></div>
<span class="t" style="left:562.5px;top:1210.0px;font-size:25.0px;color:#fff;">S</span>
<span class="t" style="left:1396.5px;top:1211.0px;font-size:24.8px;color:#2d3748;letter-spacing:0.03px;">saradunn@aesthetixcrm.com</span>
<div class="btn" style="left:1752.5px;top:1202.2px;width:127px"><i style="left:41px"></i></div>
<svg style="left:1758.5px;top:1211.2px" width="30" height="24" viewBox="0 0 30 24" fill="none" stroke="#6b7280" stroke-width="3" stroke-linecap="round" stroke-linejoin="round"><rect x="2" y="2" width="26" height="20" rx="4.5"/><path d="M3 6L15 14.5L27 6"/></svg>
<span class="t" style="left:1811.0px;top:1213.0px;font-size:21.0px;color:#6b7280;font-weight:700;letter-spacing:-1.41px;-webkit-text-stroke:0.34px #fff;">Email</span>
<span class="t" style="left:2055.0px;top:1197.0px;font-size:22.8px;color:#2d3748;letter-spacing:0.30px;">Mar 28 2024</span>
<span class="t" style="left:2062.0px;top:1226.0px;font-size:22.8px;color:#3b86d6;letter-spacing:-0.51px;">01:53 PM</span>
<span class="t" style="left:2165.5px;top:1231.0px;font-size:17.6px;color:#3b86d6;letter-spacing:-1.00px;">(EDT)</span>
<div class="a" style="left:379px;top:1272px;width:2501px;height:95px;background:#fff"></div>
<div class="hl" style="left:378px;top:1273px;width:2502px;height:1px;background:#e1e4e7"></div>
<div class="hl" style="left:378px;top:1365.5px;width:2502px;height:1.5px;background:#e9ecef"></div>
<span class="t" style="left:1279.5px;top:1308.0px;font-size:24.6px;color:#2a3342;letter-spacing:0.26px;">Total</span>
<span class="t" style="left:1340.0px;top:1308.0px;font-size:24.6px;color:#1b2436;font-weight:700;letter-spacing:-0.02px;-webkit-text-stroke:0.39px #fff;">515</span>
<span class="t" style="left:1388.5px;top:1308.0px;font-size:24.6px;color:#2a3342;letter-spacing:0.33px;">records</span>
<div class="a" style="left:1482.5px;top:1305.5px;width:2px;height:28px;background:#2a3342"></div>
<span class="t" style="left:1493.5px;top:1308.0px;font-size:24.6px;color:#1b2436;font-weight:700;-webkit-text-stroke:0.39px #fff;">1</span>
<span class="t" style="left:1512.5px;top:1308.0px;font-size:24.6px;color:#2a3342;letter-spacing:0.17px;">of 26 Pages</span>
<div class="a" style="left:1673px;top:1288px;width:46px;height:63px;border:1.5px solid #e6e8ec;border-radius:11px;background:#fff;box-shadow:0 0 18px rgba(40,50,70,.07)"></div>
<span class="t" style="left:1691.0px;top:1308.0px;font-size:24.6px;color:#2a3342;">1</span>
<svg style="left:1736px;top:1308.5px" width="14" height="22" viewBox="0 0 14 22" fill="none" stroke="#1f2937" stroke-width="3" stroke-linecap="round" stroke-linejoin="round"><path d="M3.6 3.4L10.6 11L3.6 18.6"/></svg>
<span class="t" style="left:1793.5px;top:1308.0px;font-size:24.6px;color:#2a3342;letter-spacing:-0.18px;">Page Size: 20</span>
<svg style="left:1965px;top:1317.0px" width="16" height="9" viewBox="0 0 16 9"><path d="M0.3 0.3H15.7L8 8.6Z" fill="#a9b1b9"/></svg>
<div class="a" style="left:0;top:0;width:377px;height:1367px;background:#fff"></div>
<div class="vl" style="left:377px;top:0;width:1px;height:1367px;background:#e3e5e9"></div>
<svg style="left:58px;top:36px" width="48" height="50" viewBox="58 36 48 50">
<defs><linearGradient id="lg" x1="0" y1="0" x2="0.3" y2="1"><stop offset="0" stop-color="#1679c6"/><stop offset="1" stop-color="#0a4078"/></linearGradient>
<linearGradient id="lg2" x1="0" y1="0" x2="0.3" y2="1"><stop offset="0" stop-color="#1270bb"/><stop offset="1" stop-color="#082f5c"/></linearGradient></defs>
<path d="M78.8 41.4L83.4 49.4L69.2 74.6H59.8Z" fill="url(#lg)"/>
<path d="M94 38.2H103.3L77.7 83.8H68.5Z" fill="url(#lg)"/>
<path d="M78.8 41.4L97.8 74.6H88.6L78.9 57.4L83.4 49.4Z" fill="url(#lg2)"/></svg>
<span class="t" style="left:112.5px;top:49.0px;font-size:21.6px;color:#1e2a3e;letter-spacing:3.44px;-webkit-text-stroke:0.4px #1e2a3e;">AESTHETIX</span>
<span class="t" style="left:264.5px;top:49.0px;font-size:21.6px;color:#1976bf;letter-spacing:2.66px;-webkit-text-stroke:0.4px #1976bf;">CRM</span>
<div class="a" style="left:14px;top:142px;width:349.5px;height:69.5px;border:1.5px solid #e7e8ea;border-radius:12px;background:#fff;box-shadow:0 0 24px rgba(40,50,70,.09)"></div>
<svg style="left:24px;top:157px" width="34" height="40" viewBox="0 0 34 40" fill="none" stroke="#4b5563" stroke-width="3.2" stroke-linejoin="round"><path d="M17 37.5C17 37.5 30.5 26.5 30.5 15.8C30.5 8.2 24.5 2.5 17 2.5C9.5 2.5 3.5 8.2 3.5 15.8C3.5 26.5 17 37.5 17 37.5Z"/><circle cx="17" cy="15.5" r="5"/></svg>
<span class="t" style="left:66.5px;top:158.0px;font-size:20.6px;color:#1c62a8;font-weight:700;letter-spacing:0.10px;-webkit-text-stroke:0.33px #fff;">Demo - Med Spa</span>
<span class="t" style="left:66.5px;top:183.0px;font-size:20.6px;color:#8bb2d8;letter-spacing:-0.02px;">Greenville, SC</span>
<svg style="left:328px;top:169px" width="22" height="16" viewBox="0 0 22 16" fill="none" stroke="#1c62a8" stroke-width="3.6" stroke-linecap="round" stroke-linejoin="round"><path d="M4.8 4.4L11.2 10.9L17.6 4.4"/></svg>
<div class="a" style="left:14px;top:239px;width:349.5px;height:62.5px;border:1.5px solid #e0eaf3;border-radius:12px;background:#edf6fd;box-shadow:0 0 24px rgba(40,50,70,.07)"></div>
<svg style="left:31px;top:258px" width="27" height="26" viewBox="0 0 27 26" fill="none" stroke="#1c62a8" stroke-width="3.9" stroke-linecap="round"><circle cx="10.6" cy="10.6" r="6.5"/><path d="M15.8 15.8L22.8 22.2"/></svg>
<span class="t" style="left:65.5px;top:258.0px;font-size:22.0px;color:#1c62a8;font-weight:700;letter-spacing:-0.18px;-webkit-text-stroke:0.35px #edf6fd;">Search</span>
<svg style="left:310px;top:253px" width="40" height="34" viewBox="0 0 40 34"><path d="M3.1 3.6H15.8M3.1 17.3H8.8M3.1 30.4H13.9" stroke="#b4c8de" stroke-width="1.4" fill="none"/><path d="M29.7 2.4L16.2 17.6L23.1 18.5L23.6 32.2L37.2 16.6L30.7 16.1Z" fill="#176be8" stroke="#176be8" stroke-width="1.2" stroke-linejoin="round"/></svg>
<div class="a" style="left:367px;top:327px;width:9.5px;height:658px;background:#b4b4b4;border-radius:5px"></div>
<svg style="left:30px;top:343px" width="28" height="28" viewBox="0 0 28 28"><rect x="0.5" y="0.5" width="11.5" height="9" rx="2.6" fill="#c6cad3"/><rect x="15.5" y="0.5" width="11.5" height="14.5" rx="2.6" fill="#636b80"/><rect x="0.5" y="13" width="11.5" height="14.5" rx="2.6" fill="#636b80"/><rect x="15.5" y="18.5" width="11.5" height="9" rx="2.6" fill="#c6cad3"/></svg>
<span class="t" style="left:74.5px;top:345.0px;font-size:24.8px;color:#85888c;letter-spacing:0.15px;">Dashboard</span>
<svg style="left:30px;top:404px" width="28" height="28" viewBox="0 0 28 28"><path d="M7 0H21Q28 0 28 7V21Q28 28 21 28H0V7Q0 0 7 0Z" fill="#c6cad3"/><path d="M7 11H21M7 17.5H17" stroke="#636b80" stroke-width="2.4" stroke-linecap="round"/></svg>
<span class="t" style="left:74.5px;top:406.0px;font-size:24.8px;color:#85888c;letter-spacing:0.08px;">Inbox</span>
<div class="a" style="left:316px;top:400.5px;width:33.5px;height:33.5px;border-radius:17px;background:#ea2a1a"></div>
<span class="t" style="left:327.5px;top:409.0px;font-size:17.0px;color:#fff;font-weight:700;">5</span>
<svg style="left:30px;top:464px" width="28" height="28" viewBox="0 0 28 28"><rect width="28" height="28" rx="7" fill="#c6cad3"/><path d="M8.5 14.5L12.5 18.5L20 10.5" stroke="#636b80" stroke-width="2.4" fill="none" stroke-linecap="round" stroke-linejoin="round"/></svg>
<span class="t" style="left:74.5px;top:466.0px;font-size:24.8px;color:#85888c;letter-spacing:0.28px;">Tasks</span>
<div class="a" style="left:308px;top:461.5px;width:41.5px;height:33.5px;border-radius:17px;background:#ea2a1a"></div>
<span class="t" style="left:319.5px;top:470.0px;font-size:17.0px;color:#fff;font-weight:700;letter-spacing:-0.42px;">12</span>
<svg style="left:31px;top:523.5px" width="26" height="30" viewBox="0 0 26 30"><rect x="0.5" y="4" width="25" height="25.5" rx="6" fill="#c6cad3"/><path d="M0.5 13.5V10Q0.5 4 6.5 4H19.5Q25.5 4 25.5 10V13.5Z" fill="#636b80"/><path d="M7 1.2V6M19 1.2V6" stroke="#636b80" stroke-width="2.4" stroke-linecap="round"/><circle cx="8" cy="18.5" r="1.3" fill="#636b80"/><circle cx="12.5" cy="18.5" r="1.3" fill="#636b80"/><circle cx="8" cy="23" r="1.3" fill="#636b80"/></svg>
<span class="t" style="left:74.5px;top:526.0px;font-size:24.8px;color:#85888c;letter-spacing:0.06px;">Calendars</span>
<div class="a" style="left:0;top:570px;width:366px;height:59.5px;border-radius:11px;background:#ecf5fd"></div>
<svg style="left:30px;top:585px" width="28" height="31" viewBox="0 0 28 31"><circle cx="13.8" cy="8" r="7.2" fill="#8fbde6"/><path d="M0.8 30V28Q0.8 19 13.8 19Q26.8 19 26.8 28V30Z" fill="#1166b4"/></svg>
<span class="t" style="left:74.5px;top:588.0px;font-size:24.8px;color:#1567b3;letter-spacing:0.52px;">Contacts</span>
<svg style="left:31px;top:646.5px" width="26" height="29" viewBox="0 0 26 29"><path d="M13.3 1H21.5Q25.8 1 24.3 5L16 15.9V24Q16 27.7 12.3 27.7Q8.6 27.7 8.6 24V15.9L6.2 12.9Z" fill="#c6cad3"/><path d="M3 1H11.8L4.7 12.5L1.2 7.6Q0.6 6.6 0.8 5V3Q0.8 1 3 1Z" fill="#636b80"/></svg>
<span class="t" style="left:74.5px;top:649.0px;font-size:24.8px;color:#85888c;letter-spacing:0.04px;">Pipelines</span>
<svg style="left:30px;top:709px" width="28" height="24" viewBox="0 0 28 24"><rect width="28" height="24" rx="5.5" fill="#c6cad3"/><path d="M0 8V5.5Q0 0 5.5 0H22.5Q28 0 28 5.5V8Z" fill="#636b80"/><path d="M5 18H9.5M12 18H17.5" stroke="#636b80" stroke-width="2.2" stroke-linecap="round"/></svg>
<span class="t" style="left:74.5px;top:710.0px;font-size:24.8px;color:#85888c;letter-spacing:0.03px;">Payments</span>
<div class="hl" style="left:0;top:778.5px;width:366px;height:1.5px;background:#d8dbdf"></div>
<svg style="left:28.5px;top:825px" width="31" height="24" viewBox="0 0 31 24"><rect x="0.3" y="4" width="7" height="15" rx="2.4" fill="#636b80"/><path d="M5.5 5.5L14 0.7Q18.5 -1 19.5 3.5Q21 12 19.5 20.5Q18.5 25 14 23.3L5.5 18.5Z" fill="#c6cad3"/><path d="M23 6Q25.5 12 23 18M27 3.5Q30.8 12 27 20.5" stroke="#636b80" stroke-width="1.9" fill="none" stroke-linecap="round"/></svg>
<span class="t" style="left:74.5px;top:824.0px;font-size:24.8px;color:#85888c;letter-spacing:0.45px;">Marketing</span>
<svg style="left:30px;top:884px" width="29" height="28" viewBox="0 0 29 28"><circle cx="12" cy="16" r="12" fill="#c6cad3"/><path d="M17.5 -0.2Q28.2 0.5 28.2 10.5Q28.2 14.2 24.5 14.2H18Q14.4 14.2 14.4 10.5V3Q14.4 -0.2 17.5 -0.2Z" fill="#636b80" stroke="#fff" stroke-width="2.2" paint-order="stroke"/></svg>
<span class="t" style="left:74.5px;top:886.0px;font-size:24.8px;color:#85888c;letter-spacing:0.25px;">Reporting</span>
<svg style="left:30px;top:944.5px" width="28" height="28" viewBox="0 0 28 28"><path d="M7 0H21Q28 0 28 7V16.5Q28 23.5 21 23.5H17.5L14 27.5L10.5 23.5H7Q0 23.5 0 16.5V7Q0 0 7 0Z" fill="#cfcfd2"/><circle cx="8.5" cy="12" r="1.3" fill="#8b8e94"/><circle cx="14" cy="12" r="1.3" fill="#8b8e94"/><circle cx="19.5" cy="12" r="1.3" fill="#8b8e94"/></svg>
<span class="t" style="left:74.5px;top:947.0px;font-size:24.8px;color:#85888c;letter-spacing:0.52px;">Support</span>
<div class="a" style="left:0;top:1000px;width:366px;height:20px;overflow:hidden"><svg style="left:32px;top:6px" width="31" height="32" viewBox="0 0 31 32"><path d="M15.5 0.5L29 7V25L15.5 31.5L2 25V7Z" fill="#c6cad3" stroke="#c6cad3" stroke-width="2" stroke-linejoin="round"/><circle cx="15.5" cy="16" r="5" fill="#636b80"/></svg><span class="t" style="left:82px;top:10.5px;font-size:24.8px;color:#85888c;letter-spacing:0.5px">Settings</span></div>
<div class="hl" style="left:0;top:1019.5px;width:377px;height:1.5px;background:#e3e5e9"></div>
<svg style="left:36px;top:1074px" width="37" height="36" viewBox="0 0 37 36"><path d="M3.5 3Q7 -0.5 9.5 3L14 10.5Q15.5 13 13 15.5L11.5 17Q15 23.5 20.5 27.5L14 32.5Q4 22 1.5 10Q0.8 5.5 3.5 3Z" fill="#cdcdcd"/><path d="M14.5 31L19.5 25.8Q22.3 23.3 25.6 24.9L33.3 28.7Q37 30.8 34.6 33.8Q31.2 37.2 26 36Q19.3 34.4 14.5 31Z" fill="#7d7d7d"/></svg>
<span class="t" style="left:88.5px;top:1080.0px;font-size:24.8px;color:#5d6b8a;letter-spacing:-0.30px;">Phone</span>
<svg style="left:36.5px;top:1156.5px" width="27" height="35" viewBox="0 0 27 35"><path d="M13.5 1.5Q15 1.5 15.2 3Q23 5 23 15V22L26.5 27V28.5H0.5V27L4 22V15Q4 5 11.8 3Q12 1.5 13.5 1.5Z" fill="#dcdcdc"/><path d="M9 30.5H18Q17.5 34.5 13.5 34.5Q9.5 34.5 9 30.5Z" fill="#c4c4c4"/></svg>
<span class="t" style="left:83.5px;top:1161.0px;font-size:24.8px;color:#4a4a4a;letter-spacing:-0.05px;-webkit-text-stroke:0.35px #4a4a4a;">Notifications</span>
<div class="a" style="left:27px;top:1230px;width:51px;height:51px;border-radius:50%;background:#c07bc2"></div>
<span class="t" style="left:34.5px;top:1244.0px;font-size:24.4px;color:#fff;letter-spacing:0.25px;-webkit-text-stroke:0.3px #fff;">MS</span>
<span class="t" style="left:91.5px;top:1242.0px;font-size:25.4px;color:#0a0a0a;letter-spacing:-0.08px;-webkit-text-stroke:0.25px #0a0a0a;">Profile</span>
<svg style="left:34px;top:1311px" width="54" height="30" viewBox="0 0 54 30"><g fill="#1c4a6e"><path d="M15.5 2.5Q10 0 0.5 3Q4 4.5 6 7.5Q9 10 14.5 9.5Z"/><path d="M17.5 2.5Q23 0 32 3Q28.5 4.5 26.5 7.5Q23.5 10 18.5 9.5Z"/><circle cx="16.5" cy="2.6" r="1.7"/><rect x="15.8" y="3" width="1.5" height="25" rx="0.7"/></g><path d="M13.5 11Q20 12.5 16.5 15Q13 17.5 16.5 20Q20 22 16.5 24.5M19.5 11Q13 12.5 16.5 15Q20 17.5 16.5 20Q13 22 16.5 24.5" stroke="#1c4a6e" stroke-width="1.3" fill="none"/><text x="22" y="16.2" font-family="Liberation Sans, sans-serif" font-size="5" font-weight="400" fill="#1c4a6e">HIPAA</text><text x="22" y="21.8" font-family="Liberation Sans, sans-serif" font-size="5" font-weight="400" fill="#1c4a6e">COMPLIANT</text></svg>
<div class="a" style="left:2878px;top:286px;width:2px;height:92px;background:#f1f5f6"></div>
<div class="a" style="left:331.5px;top:1274.5px;width:59px;height:58px;border:1.5px solid #ececee;border-radius:12px;background:#fff;box-shadow:0 4px 14px rgba(40,50,70,.10)"></div>
<svg style="left:351px;top:1288px" width="20" height="30" viewBox="0 0 20 30" fill="none" stroke="#000" stroke-width="3.4" stroke-linecap="round" stroke-linejoin="round"><path d="M15.5 4.5L4.5 15L15.5 25.5"/></svg>
<div class="a" style="left:2765px;top:1201.5px;width:81px;height:81px;border-radius:50%;background:#0b6bb8;box-shadow:0 8px 26px rgba(30,40,60,.16)"></div>
<svg style="left:2782px;top:1219px" width="47" height="47" viewBox="0 0 47 47"><path d="M9.5 2H37.5Q45 2 45 9.5V31.5Q45 39 37.5 39H29.5L23.5 45.5L17.5 39H9.5Q2 39 2 31.5V9.5Q2 2 9.5 2Z" fill="#fff"/><path d="M23.5 12.3Q24.5 20 32.2 21Q24.5 22 23.5 29.7Q22.5 22 14.8 21Q22.5 20 23.5 12.3Z" fill="#0b6bb8" stroke="#0b6bb8" stroke-width="1.9" stroke-linejoin="round"/></svg>
<div class="a" style="left:2821px;top:1193px;width:34px;height:34px;border-radius:50%;background:#f70000"></div>
<span class="t" style="left:2832.5px;top:1198.0px;font-size:21.0px;color:#fff;">2</span>
<div class="a" style="left:725px;top:425px;width:145px;height:145px;border-radius:50%;background:rgba(0,0,0,.4)"></div>
<div class="a" style="left:762.5px;top:463px;width:69px;height:69px;border-radius:50%;background:#000"></div>
</div>
</body></html>
